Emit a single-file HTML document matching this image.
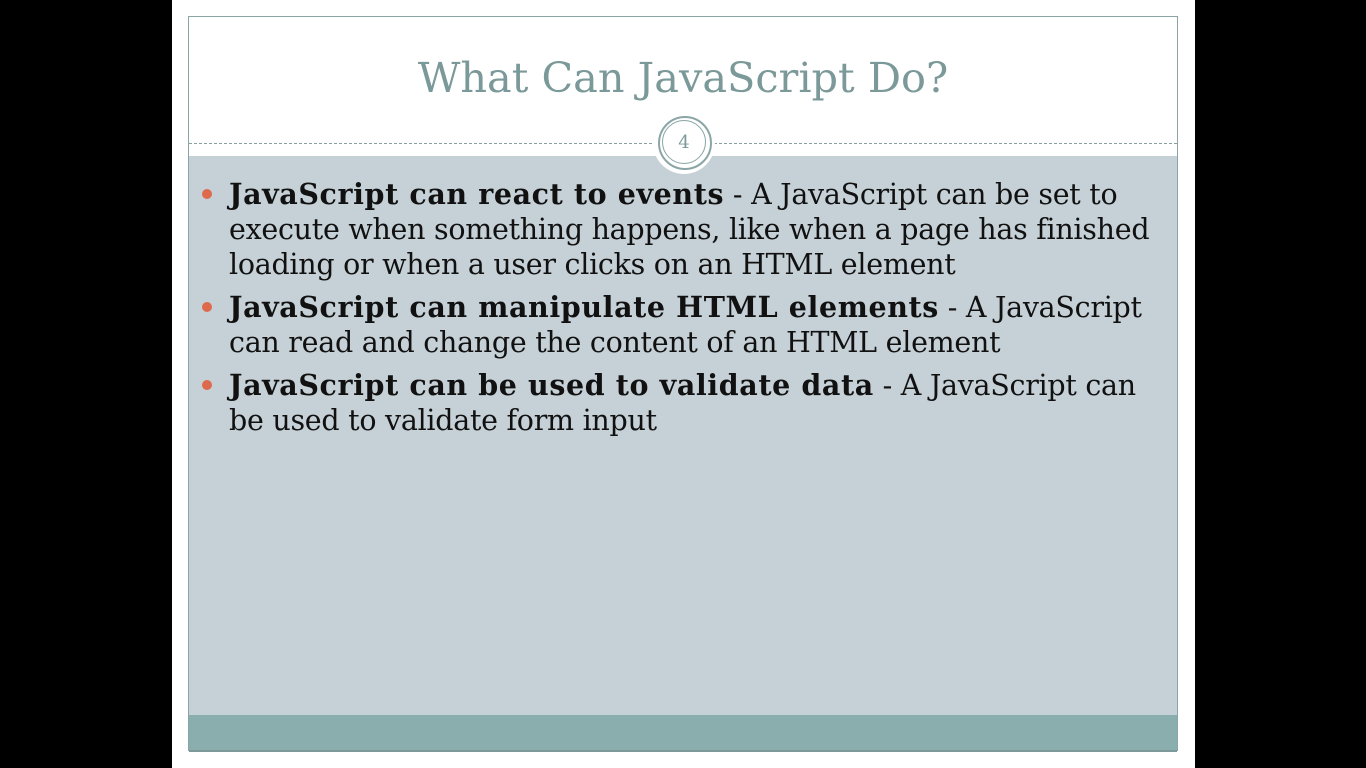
<!DOCTYPE html>
<html><head><style>
body{margin:0;width:1366px;height:768px;background:#000;position:relative;overflow:hidden;font-family:"DejaVu Serif",serif}
.slide{position:absolute;left:172px;top:0;width:1023px;height:768px;background:#fff}
.frame{position:absolute;left:188px;top:16px;width:988px;height:733px;border:1px solid #8aa5a5}
.body{position:absolute;left:189px;top:156px;width:988px;height:559px;background:#c6d1d7}
.foot{position:absolute;left:189px;top:715px;width:988px;height:35px;background:#8aadad;border-bottom:2px solid #7d9999}
.dash{position:absolute;left:189px;top:143px;width:988px;border-top:1px dashed #8aa0a0}
.title{position:absolute;left:189px;width:988px;top:52px;text-align:center;font-size:41.4px;line-height:52px;color:#7b9999;white-space:nowrap}
.circ{position:absolute;left:653px;top:112px;width:62px;height:62px;border-radius:50%;background:#fff}
.circ2{position:absolute;left:658px;top:116px;width:50px;height:50px;border-radius:50%;border:2px solid #8aa5a5}
.circ3{position:absolute;left:662px;top:120px;width:42px;height:42px;border-radius:50%;border:1px solid #8aa5a5;text-align:center;line-height:43px;font-size:18px;color:#7b9999}
ul{position:absolute;left:229px;top:177px;width:960px;margin:0;padding:0;list-style:none;font-size:28.5px;line-height:35px;color:#111;white-space:nowrap;letter-spacing:-0.27px}
b{letter-spacing:0.6px}
li{position:relative;margin-bottom:8px}
li:before{content:"";position:absolute;left:-27px;top:12px;width:10px;height:10px;border-radius:50%;background:#dd6a4c}
</style></head><body>
<div class="slide"></div>
<div class="frame"></div>
<div class="body"></div>
<div class="foot"></div>
<div class="dash"></div>
<div class="title">What Can JavaScript Do?</div>
<div class="circ"></div><div class="circ2"></div><div class="circ3">4</div>
<ul>
<li><b>JavaScript can react to events</b> - A JavaScript can be set to<br>execute when something happens, like when a page has finished<br>loading or when a user clicks on an HTML element</li>
<li><b>JavaScript can manipulate HTML elements</b> - A JavaScript<br>can read and change the content of an HTML element</li>
<li><b>JavaScript can be used to validate data</b> - A JavaScript can<br>be used to validate form input</li>
</ul>
</body></html>
